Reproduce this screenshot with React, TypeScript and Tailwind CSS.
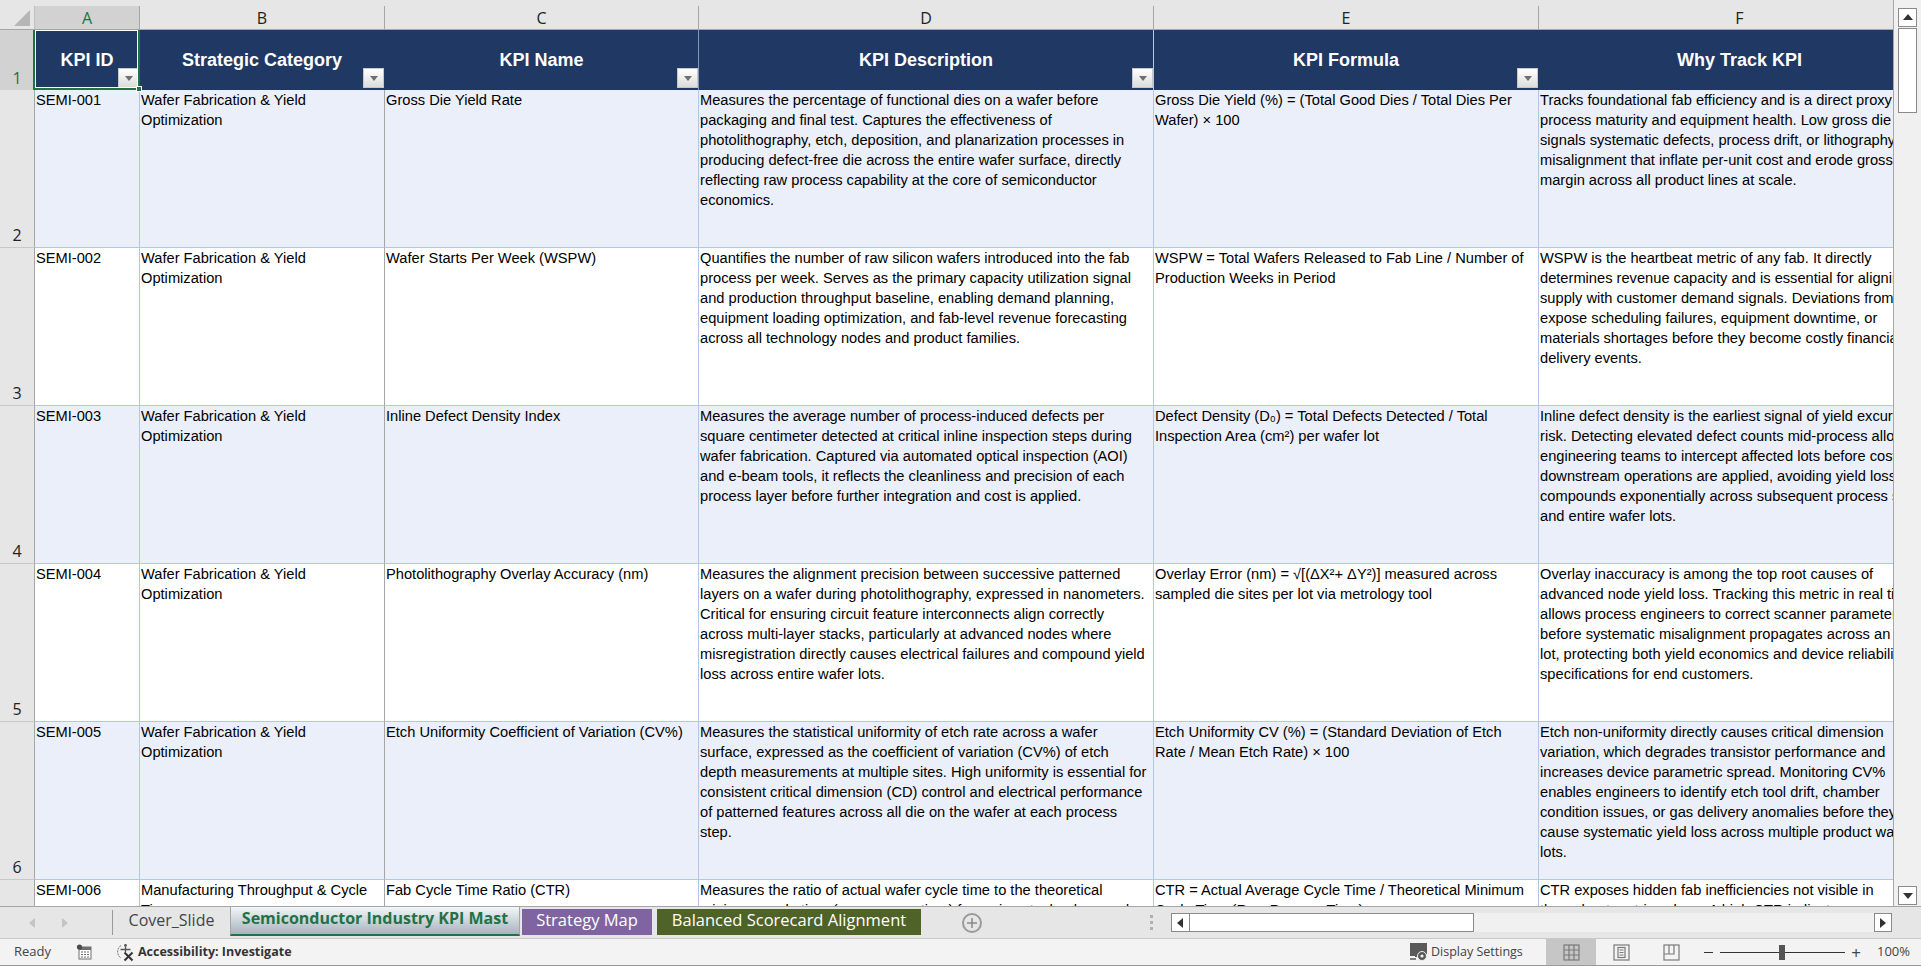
const cols = [
  { key: "A", title: "KPI ID", width: "w-[105px]", line: "border-[#b4c6e7]", headLine: "border-[#203864]" },
  { key: "B", title: "Strategic Category", width: "w-[245px]", line: "border-[#b4c6e7]", headLine: "border-[#203864]" },
  { key: "C", title: "KPI Name", width: "w-[314px]", line: "border-[#a6a6a6]", headLine: "border-[#8496b0]" },
  { key: "D", title: "KPI Description", width: "w-[455px]", line: "border-[#b4c6e7]", headLine: "border-[#b4c6e7]" },
  { key: "E", title: "KPI Formula", width: "w-[385px]", line: "border-[#b4c6e7]", headLine: "border-[#203864]" },
  { key: "F", title: "Why Track KPI", width: "w-[402px]", line: "border-[#b4c6e7]", headLine: "border-[#b4c6e7]" },
];

const rows = [
  [
    ["SEMI-001"],
    ["Wafer Fabrication & Yield", "Optimization"],
    ["Gross Die Yield Rate"],
    [
      "Measures the percentage of functional dies on a wafer before",
      "packaging and final test. Captures the effectiveness of",
      "photolithography, etch, deposition, and planarization processes in",
      "producing defect-free die across the entire wafer surface, directly",
      "reflecting raw process capability at the core of semiconductor",
      "economics.",
    ],
    ["Gross Die Yield (%) = (Total Good Dies / Total Dies Per", "Wafer) × 100"],
    [
      "Tracks foundational fab efficiency and is a direct proxy for",
      "process maturity and equipment health. Low gross die yield",
      "signals systematic defects, process drift, or lithography",
      "misalignment that inflate per-unit cost and erode gross",
      "margin across all product lines at scale.",
    ],
  ],
  [
    ["SEMI-002"],
    ["Wafer Fabrication & Yield", "Optimization"],
    ["Wafer Starts Per Week (WSPW)"],
    [
      "Quantifies the number of raw silicon wafers introduced into the fab",
      "process per week. Serves as the primary capacity utilization signal",
      "and production throughput baseline, enabling demand planning,",
      "equipment loading optimization, and fab-level revenue forecasting",
      "across all technology nodes and product families.",
    ],
    ["WSPW = Total Wafers Released to Fab Line / Number of", "Production Weeks in Period"],
    [
      "WSPW is the heartbeat metric of any fab. It directly",
      "determines revenue capacity and is essential for aligning",
      "supply with customer demand signals. Deviations from plan",
      "expose scheduling failures, equipment downtime, or",
      "materials shortages before they become costly financial and",
      "delivery events.",
    ],
  ],
  [
    ["SEMI-003"],
    ["Wafer Fabrication & Yield", "Optimization"],
    ["Inline Defect Density Index"],
    [
      "Measures the average number of process-induced defects per",
      "square centimeter detected at critical inline inspection steps during",
      "wafer fabrication. Captured via automated optical inspection (AOI)",
      "and e-beam tools, it reflects the cleanliness and precision of each",
      "process layer before further integration and cost is applied.",
    ],
    ["Defect Density (D₀) = Total Defects Detected / Total", "Inspection Area (cm²) per wafer lot"],
    [
      "Inline defect density is the earliest signal of yield excursion",
      "risk. Detecting elevated defect counts mid-process allows",
      "engineering teams to intercept affected lots before costly",
      "downstream operations are applied, avoiding yield loss that",
      "compounds exponentially across subsequent process steps",
      "and entire wafer lots.",
    ],
  ],
  [
    ["SEMI-004"],
    ["Wafer Fabrication & Yield", "Optimization"],
    ["Photolithography Overlay Accuracy (nm)"],
    [
      "Measures the alignment precision between successive patterned",
      "layers on a wafer during photolithography, expressed in nanometers.",
      "Critical for ensuring circuit feature interconnects align correctly",
      "across multi-layer stacks, particularly at advanced nodes where",
      "misregistration directly causes electrical failures and compound yield",
      "loss across entire wafer lots.",
    ],
    ["Overlay Error (nm) = √[(ΔX²+ ΔY²)] measured across", "sampled die sites per lot via metrology tool"],
    [
      "Overlay inaccuracy is among the top root causes of",
      "advanced node yield loss. Tracking this metric in real time",
      "allows process engineers to correct scanner parameters",
      "before systematic misalignment propagates across an entire",
      "lot, protecting both yield economics and device reliability",
      "specifications for end customers.",
    ],
  ],
  [
    ["SEMI-005"],
    ["Wafer Fabrication & Yield", "Optimization"],
    ["Etch Uniformity Coefficient of Variation (CV%)"],
    [
      "Measures the statistical uniformity of etch rate across a wafer",
      "surface, expressed as the coefficient of variation (CV%) of etch",
      "depth measurements at multiple sites. High uniformity is essential for",
      "consistent critical dimension (CD) control and electrical performance",
      "of patterned features across all die on the wafer at each process",
      "step.",
    ],
    ["Etch Uniformity CV (%) = (Standard Deviation of Etch", "Rate / Mean Etch Rate) × 100"],
    [
      "Etch non-uniformity directly causes critical dimension",
      "variation, which degrades transistor performance and",
      "increases device parametric spread. Monitoring CV%",
      "enables engineers to identify etch tool drift, chamber",
      "condition issues, or gas delivery anomalies before they",
      "cause systematic yield loss across multiple product wafer",
      "lots.",
    ],
  ],
  [
    ["SEMI-006"],
    ["Manufacturing Throughput & Cycle", "Time"],
    ["Fab Cycle Time Ratio (CTR)"],
    [
      "Measures the ratio of actual wafer cycle time to the theoretical",
      "minimum cycle time (raw process time) for a given technology node",
    ],
    ["CTR = Actual Average Cycle Time / Theoretical Minimum", "Cycle Time (Raw Process Time)"],
    ["CTR exposes hidden fab inefficiencies not visible in", "throughput metrics alone. A high CTR indicates"],
  ],
];

const FilterButton = () => (
  <div className="absolute right-0 bottom-[2px] flex h-[20px] w-[21px] items-center justify-center border border-[#c8c8c8] bg-gradient-to-b from-[#ffffff] to-[#dcdcdc]">
    <div className="h-0 w-0 border-x-[4px] border-t-[5px] border-x-transparent border-t-[#6f6f6f]" />
  </div>
);

const Triangle = ({ dir, color }: { dir: "up" | "down" | "left" | "right"; color: string }) => {
  const points = {
    up: "1,8 6,2 11,8",
    down: "1,3 11,3 6,9",
    left: "8,1 8,11 2,6",
    right: "3,1 3,11 9,6",
  }[dir];
  return (
    <svg width="12" height="12" viewBox="0 0 12 12">
      <polygon points={points} fill={color} />
    </svg>
  );
};

const GridIcon = () => (
  <svg width="17" height="17" viewBox="0 0 17 17" fill="none" stroke="#7a7a7a" strokeWidth="1.2">
    <rect x="1" y="1" width="15" height="15" />
    <path d="M6 1v15M11 1v15M1 6h15M1 11h15" />
  </svg>
);

const PageIcon = () => (
  <svg width="17" height="17" viewBox="0 0 17 17" fill="none" stroke="#7a7a7a" strokeWidth="1.2">
    <rect x="1" y="1" width="15" height="15" />
    <rect x="5" y="3.5" width="7" height="10" />
    <path d="M6.5 6h4M6.5 8.5h4M6.5 11h4" />
  </svg>
);

const BreakIcon = () => (
  <svg width="17" height="17" viewBox="0 0 17 17" fill="none" stroke="#7a7a7a" strokeWidth="1.2">
    <rect x="1" y="1" width="15" height="15" />
    <path d="M6 1v9h5V1M1 10h5" />
  </svg>
);

const MacroIcon = () => (
  <svg width="16" height="16" viewBox="0 0 16 16">
    <rect x="3" y="3" width="12" height="12" fill="#fff" stroke="#6e6e6e" />
    <rect x="3" y="3" width="12" height="3" fill="#6e6e6e" />
    <circle cx="3.5" cy="3" r="2.6" fill="#4a4a4a" />
    <path d="M5 8h2M8 8h2M11 8h2M5 10.5h2M8 10.5h2M11 10.5h2M5 13h2M8 13h2M11 13h2" stroke="#6e6e6e" />
  </svg>
);

const AccessibilityIcon = () => (
  <svg width="20" height="20" viewBox="0 0 20 20" fill="none">
    <path d="M6 3.5A7.5 7.5 0 0 0 6 16" stroke="#666" strokeWidth="1" strokeDasharray="2 1" />
    <circle cx="10.5" cy="3.5" r="1.4" fill="#555" />
    <path d="M5.5 7.5h10M10.5 5v5" stroke="#555" strokeWidth="1.3" />
    <path d="M9.5 10.5l8 8M17.5 10.5l-8 8" stroke="#333" strokeWidth="2" />
  </svg>
);

const DisplayIcon = () => (
  <svg width="20" height="20" viewBox="0 0 20 20">
    <path d="M1 1h17v11h-7v3H6v-1H1z" fill="#5a5a5a" />
    <path d="M1 17h6" stroke="#5a5a5a" strokeWidth="1.5" />
    <circle cx="13" cy="14" r="4.5" fill="#5a5a5a" stroke="#f3f3f3" strokeWidth="1" />
    <circle cx="13" cy="14" r="1.6" fill="#f3f3f3" />
  </svg>
);

const ColumnHeaders = () => (
  <div className="flex h-[24px] shrink-0 overflow-hidden border-b border-[#a6a6a6] bg-[#e6e6e6] font-['Open_Sans',sans-serif] text-[16px] text-[#222]">
    <div className="relative w-[35px] shrink-0 border-r border-[#c0c0c0]">
      <div className="absolute top-[4px] left-[14px]">
        <svg width="16" height="16" viewBox="0 0 16 16">
          <polygon points="16,0 16,16 0,16" fill="#b6b6b6" />
        </svg>
      </div>
    </div>
    {cols.map((col) => (
      <div
        key={col.key}
        className={`${col.width} flex shrink-0 items-center justify-center border-r border-[#a6a6a6] ${
          col.key === "A" ? "bg-[#d2d2d2] text-[#217346]" : ""
        }`}
      >
        {col.key}
      </div>
    ))}
  </div>
);

const HeaderRow = () => (
  <div className="flex h-[60px] shrink-0">
    <div className="flex w-[35px] shrink-0 items-end justify-center border-r border-[#a6a6a6] bg-[#d2d2d2] font-['Open_Sans',sans-serif] text-[16px] text-[#217346]">
      1
    </div>
    {cols.map((col) => (
      <div
        key={col.key}
        className={`${col.width} relative flex shrink-0 items-center justify-center border-r bg-[#203864] text-[18px] font-bold text-white ${col.headLine}`}
      >
        {col.title}
        {col.key !== "F" && <FilterButton />}
      </div>
    ))}
  </div>
);

const DataRow = ({ row, index }: { row: string[][]; index: number }) => (
  <div className="flex h-[158px] shrink-0">
    <div className="flex w-[35px] shrink-0 items-end justify-center border-r border-b border-[#a6a6a6] border-b-[#c8c8c8] bg-[#e6e6e6] font-['Open_Sans',sans-serif] text-[16px] text-[#222]">
      {index + 2}
    </div>
    {cols.map((col, i) => (
      <div
        key={col.key}
        className={`${col.width} shrink-0 overflow-hidden border-r border-b border-b-[#b4c6e7] px-[1px] text-[14.67px] leading-[20px] whitespace-nowrap text-black ${
          cols[i + 1]?.line ?? "border-[#b4c6e7]"
        } ${index % 2 === 0 ? "bg-[#eaeff9]" : "bg-white"}`}
      >
        {row[i].map((line) => (
          <div key={line}>{line}</div>
        ))}
      </div>
    ))}
  </div>
);

const StatusBar = () => (
  <div className="flex h-[28px] shrink-0 items-center border-t border-b border-t-[#c8c8c8] border-b-[#9a9a9a] bg-[#f3f3f3] font-['Open_Sans',sans-serif] text-[13px] text-[#444]">
    <span className="ml-[14px] w-[62px]">Ready</span>
    <MacroIcon />
    <div className="ml-[23px]">
      <AccessibilityIcon />
    </div>
    <span className="ml-[3px] text-[12.5px] font-bold text-[#333]">Accessibility: Investigate</span>
    <div className="ml-auto flex h-full items-center">
      <DisplayIcon />
      <span className="ml-[2px] w-[115px] text-[12.5px]">Display Settings</span>
      <div className="flex h-full w-[50px] items-center justify-center bg-[#c6c6c6]">
        <GridIcon />
      </div>
      <div className="flex w-[50px] justify-center">
        <PageIcon />
      </div>
      <div className="flex w-[50px] justify-center">
        <BreakIcon />
      </div>
      <div className="ml-[8px] h-[1px] w-[9px] bg-[#333]" />
      <div className="relative ml-[7px] h-[1px] w-[125px] bg-[#333]">
        <div className="absolute top-[-7px] left-[59px] h-[15px] w-[6px] bg-[#555]" />
      </div>
      <span className="ml-[3px] w-[16px] text-center text-[17px] leading-none">+</span>
      <span className="ml-[13px] w-[44px] text-[13px]">100%</span>
    </div>
  </div>
);

const TabBar = () => (
  <div className="flex h-[32px] shrink-0 border-t border-[#a6a6a6] bg-[#e6e6e6] font-['Open_Sans',sans-serif] text-[16px]">
    <div className="flex w-[112px] shrink-0 items-center pl-[27px]">
      <Triangle dir="left" color="#c4c4c4" />
      <div className="ml-[20px]">
        <Triangle dir="right" color="#c4c4c4" />
      </div>
    </div>
    <div className="my-[3px] flex w-[118px] shrink-0 items-center justify-center border-l border-[#9a9a9a] pb-[5px] text-[#444]">
      Cover_Slide
    </div>
    <div className="flex h-[29px] w-[290px] shrink-0 items-center justify-center border-x border-b-[2px] border-x-[#a6a6a6] border-b-[#217346] bg-gradient-to-b from-[#f4f6f8] to-[#a8b4be] pb-[6px] font-bold text-[#217346]">
      Semiconductor Industry KPI Mast
    </div>
    <div className="mt-[2px] ml-[2px] flex h-[26px] w-[130px] shrink-0 items-center justify-center bg-[#8064a2] pb-[4px] text-[16.5px] text-white">
      Strategy Map
    </div>
    <div className="mt-[2px] ml-[5px] flex h-[26px] w-[264px] shrink-0 items-center justify-center bg-[#4f6228] pb-[4px] text-[16.5px] text-white">
      Balanced Scorecard Alignment
    </div>
    <div className="ml-[41px] flex h-[20px] w-[20px] shrink-0 translate-y-[6px] items-center justify-center rounded-full border-2 border-[#9a9a9a] text-[#8a8a8a]">
      <svg width="10" height="10" viewBox="0 0 10 10">
        <path d="M5 0v10M0 5h10" stroke="#8a8a8a" strokeWidth="1.5" />
      </svg>
    </div>
    <div className="ml-[168px] flex flex-col justify-center gap-[3px]">
      <div className="h-[3px] w-[3px] bg-[#b0b0b0]" />
      <div className="h-[3px] w-[3px] bg-[#b0b0b0]" />
      <div className="h-[3px] w-[3px] bg-[#b0b0b0]" />
    </div>
    <div className="mt-[6px] ml-[18px] flex h-[19px] w-[721px] shrink-0 items-stretch bg-[#f0f0f0]">
      <div className="flex w-[19px] items-center justify-center border border-[#8a8a8a] bg-white">
        <Triangle dir="left" color="#333" />
      </div>
      <div className="w-[284px] border-y border-r border-[#8a8a8a] bg-white" />
      <div className="ml-auto flex w-[18px] items-center justify-center border border-[#8a8a8a] bg-white">
        <Triangle dir="right" color="#333" />
      </div>
    </div>
  </div>
);

const VerticalScrollbar = () => (
  <div className="flex w-[27px] shrink-0 flex-col items-center bg-[#f0f0f0] pt-[8px] pb-[1px]">
    <div className="flex h-[19px] w-[19px] items-center justify-center border border-[#8a8a8a] bg-white">
      <Triangle dir="up" color="#333" />
    </div>
    <div className="mt-[1px] h-[85px] w-[19px] border border-[#8a8a8a] bg-white" />
    <div className="mt-auto flex h-[19px] w-[19px] items-center justify-center border border-[#8a8a8a] bg-white">
      <Triangle dir="down" color="#333" />
    </div>
  </div>
);

const App = () => {
  return (
    <div className="flex h-[966px] w-[1921px] flex-col overflow-hidden bg-[#e6e6e6] font-['Liberation_Sans',Arial,sans-serif]">
      <div className="flex min-h-0 flex-1">
        <div className="flex w-[1894px] shrink-0 flex-col overflow-hidden border-r border-[#a6a6a6]">
          <div className="h-[6px] shrink-0 bg-[#e6e6e6]" />
          <ColumnHeaders />
          <div className="relative min-h-0 flex-1 overflow-hidden">
            <HeaderRow />
            {rows.map((row, index) => (
              <DataRow key={row[0][0]} row={row} index={index} />
            ))}
            <div className="absolute top-[-2px] left-[33px] h-[62px] w-[107px] border-2 border-[#217346]">
              <div className="h-full w-full border border-white" />
              <div className="absolute right-[-4px] bottom-[-4px] h-[6px] w-[6px] border border-white bg-[#217346]" />
            </div>
          </div>
        </div>
        <VerticalScrollbar />
      </div>
      <TabBar />
      <StatusBar />
    </div>
  );
};

export default App;
